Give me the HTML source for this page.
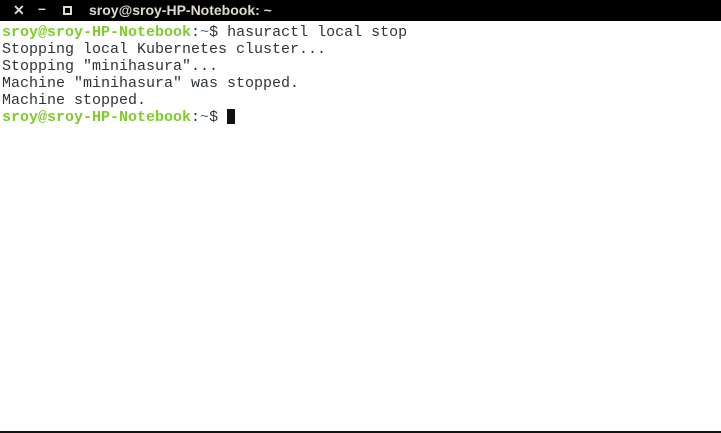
<!DOCTYPE html>
<html><head><style>
html,body{margin:0;padding:0;width:721px;height:433px;overflow:hidden;background:#fff;position:relative}
.tb{position:absolute;left:0;top:0;width:721px;height:21px;background:#000;color:#dfdbd2;font:bold 14px "Liberation Sans",sans-serif}
.tb span{position:absolute;top:2px}
.term{position:absolute;left:2px;top:24px;font:15px/17px "Liberation Mono",monospace;color:#2e3436;white-space:pre}
.g{color:#80cc2c;font-weight:bold}
.b{color:#3465a4}
.cur{display:inline-block;width:8px;height:15px;background:#111;vertical-align:-3px}
.bot{position:absolute;left:0;top:431px;width:721px;height:2px;background:#111}
</style></head><body>
<div class="tb"><span style="left:13px">✕</span><span style="left:38px;top:0">–</span><span style="left:63px;top:6px;width:5px;height:5px;border:2px solid #dfdbd2;box-sizing:content-box"></span><span style="left:89px">sroy@sroy-HP-Notebook: ~</span></div>
<div class="term"><span class="g">sroy@sroy-HP-Notebook</span>:<span class="b">~</span>$ hasuractl local stop
Stopping local Kubernetes cluster...
Stopping "minihasura"...
Machine "minihasura" was stopped.
Machine stopped.
<span class="g">sroy@sroy-HP-Notebook</span>:<span class="b">~</span>$ <span class="cur"></span></div>
<div class="bot"></div>
</body></html>
